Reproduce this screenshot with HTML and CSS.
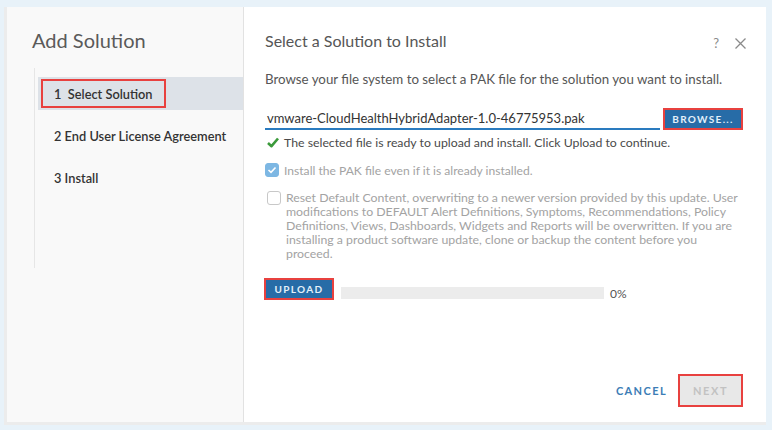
FILE: index.html
```html
<!DOCTYPE html>
<html lang="en">
<head>
<meta charset="utf-8">
<title>Add Solution</title>
<link rel="stylesheet" href="styles.css">
</head>
<body>
<div class="modal">
  <aside class="sidebar">
    <h1 class="side-title">Add Solution</h1>
    <ul class="steps">
      <li class="step active"><span class="step-label">1&nbsp; Select Solution</span></li>
      <li class="step"><span class="step-label">2 End User License Agreement</span></li>
      <li class="step"><span class="step-label">3 Install</span></li>
    </ul>
  </aside>
  <section class="main">
    <header class="head">
      <h2 class="main-title">Select a Solution to Install</h2>
      <div class="head-icons">
        <span class="help">?</span>
        <svg class="close" width="11" height="11" viewBox="0 0 11 11"><path d="M0.5 0.5 L10.5 10.5 M10.5 0.5 L0.5 10.5" stroke="#8a8a8a" stroke-width="1.3" fill="none"/></svg>
      </div>
    </header>
    <p class="desc">Browse your file system to select a PAK file for the solution you want to install.</p>
    <div class="file-row">
      <div class="file-input">vmware-CloudHealthHybridAdapter-1.0-46775953.pak</div>
      <span class="hl"><button class="btn primary">BROWSE...</button></span>
    </div>
    <div class="status">
      <svg class="ok" width="12" height="11" viewBox="0 0 12 11"><path d="M1 6 L4.5 9.2 L11 1.5" stroke="#3b9a3b" stroke-width="2.6" fill="none" stroke-linejoin="round"/></svg>
      <span>The selected file is ready to upload and install. Click Upload to continue.</span>
    </div>
    <div class="check-row first">
      <span class="cb on"><svg width="10" height="8" viewBox="0 0 10 8"><path d="M1.5 4 L4 6.3 L8.5 1.5" stroke="#fff" stroke-width="1.6" fill="none"/></svg></span>
      <span class="cb-text">Install the PAK file even if it is already installed.</span>
    </div>
    <div class="check-row second">
      <span class="cb"></span>
      <span class="cb-text multi">Reset Default Content, overwriting to a newer version provided by this update. User modifications to DEFAULT Alert Definitions, Symptoms, Recommendations, Policy Definitions, Views, Dashboards, Widgets and Reports will be overwritten. If you are installing a product software update, clone or backup the content before you proceed.</span>
    </div>
    <div class="upload-row">
      <span class="hl"><button class="btn primary">UPLOAD</button></span>
      <div class="progress"></div>
      <span class="pct">0%</span>
    </div>
    <footer class="foot">
      <button class="link">CANCEL</button>
      <span class="hl big"><button class="btn disabled">NEXT</button></span>
    </footer>
  </section>
</div>
</body>
</html>
```
FILE: styles.css
```css
* { box-sizing: border-box; }
html, body { margin: 0; height: 100%; }
body {
  background: #e8f2f9;
  padding: 7px 6px 5px 4px;
  font-family: "Lato", "Open Sans", sans-serif;
  color: #565656;
}
.modal {
  display: flex;
  height: 418px;
  background: #fff;
  border-left: 3px solid #ececec;
  border-bottom: 3px solid #ececec;
}
.sidebar {
  width: 237px;
  flex: none;
  background: #f9f9f9;
  border-right: 1px solid #e2e2e2;
  padding-top: 21px;
}
.side-title {
  margin: 0 0 0 25px;
  font-size: 20px;
  line-height: 24px;
  font-weight: 400;
  color: #5a5a5a;
}
.steps {
  list-style: none;
  margin: 16px 0 0 27px;
  padding: 9px 0 0 0;
  border-left: 1px solid #e6e6e6;
  height: 200px;
}
.step {
  height: 33px;
  margin: 0 0 9px 3px;
  padding: 2px 3px;
  display: flex;
  align-items: center;
  font-size: 12.8px;
  font-weight: 600;
  color: #333;
  white-space: nowrap;
}
.step.active { background: #dde2e8; }
.step-label {
  display: flex;
  align-items: center;
  height: 29px;
  padding: 0 11px;
  border: 2px solid transparent;
}
.step.active .step-label { border-color: #e8413f; }

.main {
  flex: 1;
  display: flex;
  flex-direction: column;
  padding: 24px 23px 15px 21px;
}
.head {
  display: flex;
  align-items: center;
  height: 20px;
}
.main-title {
  margin: 0;
  flex: 1;
  font-size: 16px;
  line-height: 20px;
  font-weight: 400;
  color: #565656;
}
.head-icons {
  display: flex;
  align-items: center;
  gap: 16px;
  padding-top: 4px;
  margin-right: -3px;
}
.help { font-size: 13px; color: #8a8a8a; }
.desc {
  margin: 19px 0 0 0;
  font-size: 13.3px;
  line-height: 18px;
}
.file-row {
  display: flex;
  align-items: flex-end;
  gap: 3px;
  margin-top: 20px;
}
.file-input {
  flex: 1;
  height: 22px;
  padding: 2px 0 0 2px;
  border-bottom: 2px solid #2a7bbf;
  font-size: 13px;
  color: #333;
  white-space: nowrap;
}
.hl {
  display: inline-flex;
  border: 2px solid #e8413f;
}
.btn {
  border: 0;
  margin: 0;
  font-family: inherit;
  font-weight: 700;
  font-size: 10px;
  letter-spacing: 1.3px;
  padding: 0;
}
.btn.primary {
  background: #276ca7;
  color: #e4f0fa;
  height: 18px;
}
.file-row .btn.primary { width: 76px; }
.status {
  display: flex;
  align-items: center;
  gap: 5px;
  height: 16px;
  margin-top: 4px;
  padding-left: 2px;
  font-size: 12.3px;
  color: #4a4a4a;
}
.check-row {
  display: flex;
  align-items: flex-start;
  gap: 5px;
  font-size: 12.1px;
  color: #a3a3a3;
}
.check-row.first { margin-top: 12px; align-items: center; height: 16px; }
.check-row.second { margin-top: 13px; padding-left: 2px; }
.cb {
  flex: none;
  width: 14px;
  height: 14px;
  border: 1px solid #c8c8c8;
  border-radius: 3px;
  background: #fff;
  display: flex;
  align-items: center;
  justify-content: center;
}
.cb.on { background: #7db7e3; border-color: #7db7e3; }
.cb-text.multi { line-height: 14px; font-size: 12.3px; }
.upload-row {
  display: flex;
  align-items: center;
  margin-top: 16px;
  margin-left: -1px;
}
.upload-row .btn.primary { width: 66px; }
.progress {
  margin-left: 7px;
  width: 263px;
  height: 12px;
  margin-top: 8px;
  background: #ececec;
}
.pct { margin-left: 6px; margin-top: 9px; font-size: 12px; color: #555; }
.foot {
  margin-top: auto;
  display: flex;
  justify-content: flex-end;
  align-items: center;
  gap: 11px;
}
.link {
  background: none;
  border: 0;
  padding: 0;
  font-family: inherit;
  font-weight: 700;
  font-size: 11px;
  letter-spacing: 1.4px;
  color: #3c7db6;
}
.hl.big { padding: 0; }
.btn.disabled {
  width: 61px;
  height: 29px;
  background: #e8e8e8;
  color: #c2c2c2;
  font-size: 11px;
  letter-spacing: 1.6px;
}
```
